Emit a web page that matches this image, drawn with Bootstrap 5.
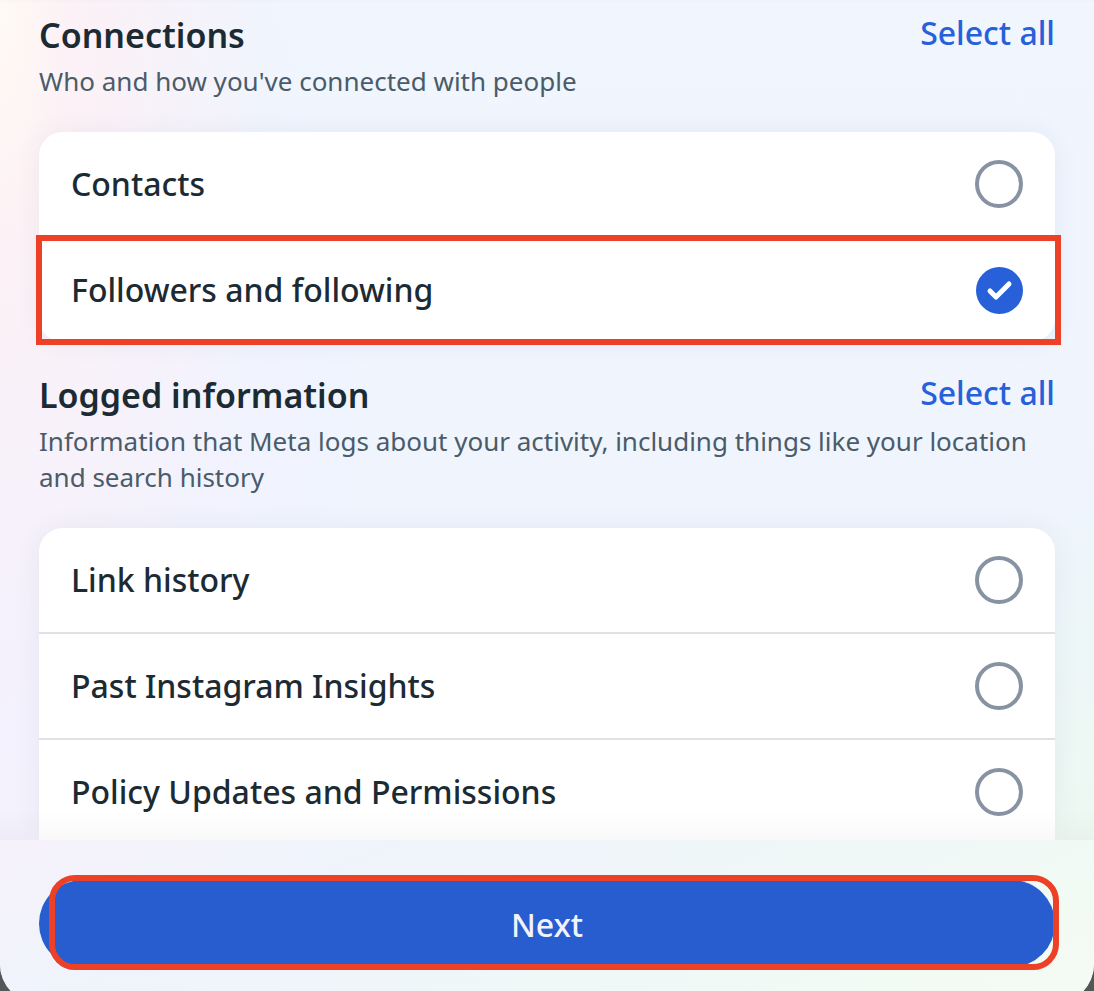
<!DOCTYPE html>
<html lang="en">
<head>
<meta charset="utf-8">
<meta name="viewport" content="width=device-width, initial-scale=1">
<title>Select information</title>
<link href="https://cdn.jsdelivr.net/npm/bootstrap@5.3.0/dist/css/bootstrap.min.css" rel="stylesheet">
<style>
  body {
    background: #555657;
    color: #1c2b33;
    font-family: "Noto Sans", sans-serif;
    font-size: 32px;
  }
  /* The sheet runs a little past the window, so its round corners are cut by the bottom edge */
  .sheet {
    height: calc(100vh + 13px);
    border-radius: 0 0 40px 40px;
    overflow: hidden;
    background:
      linear-gradient(to bottom, rgba(0, 0, 0, .015), transparent 4px),
      radial-gradient(ellipse 180px 420px at 100% 88%, #edf9f0, rgba(237, 249, 240, 0)),
      radial-gradient(ellipse 70px 260px at 0 0, #fffaf4, rgba(255, 250, 244, 0)),
      radial-gradient(ellipse 280px 560px at 0 10%, #fdf1f6 20%, rgba(253, 241, 246, 0)),
      radial-gradient(ellipse 380px 900px at 0 60%, #f4f1fd 10%, rgba(244, 241, 253, 0)),
      linear-gradient(#f0f5fe, #eef4fc);
  }
  .sheet-body { min-height: 0; padding: 14px 39px 0; }
  .group { margin-bottom: 32px; }
  .group-title { font-size: 34px; line-height: 42px; font-weight: 600; }
  .group-action { line-height: 38px; font-weight: 500; color: #2760d9; }
  .group-note { font-size: 26px; line-height: 36px; color: #4a5b69; margin: 7px 0 33px; }
  .option-list {
    --bs-list-group-border-radius: 24px;
    box-shadow: 0 0 28px rgba(40, 60, 100, .06);
  }
  .option {
    min-height: 104px;
    padding: 0 32px;
    font-weight: 500;
    color: #1c2b33;
    border: 0;
    cursor: pointer;
  }
  .option + .option { min-height: 106px; border-top: 2px solid #dee2e7; }
  .option .form-check-input {
    width: 48px;
    height: 48px;
    margin: 0;
    border: 4px solid #8793a3;
    border-radius: 50%;
    background-color: #fff;
  }
  .option .form-check-input:checked {
    width: 47px;
    height: 47px;
    border: 0;
    background: #2760d9 url("data:image/svg+xml,%3Csvg xmlns='http://www.w3.org/2000/svg' viewBox='0 0 47 47'%3E%3Cpath d='M14 24l6 6L33 17' fill='none' stroke='%23fff' stroke-width='5' stroke-linecap='round' stroke-linejoin='round'/%3E%3C/svg%3E") center / 100% no-repeat;
  }
  .callout-box { position: relative; }
  .callout-box::after {
    content: "";
    position: absolute;
    z-index: 2;
    border: 6px solid #ec4126;
    pointer-events: none;
  }
  .callout-row::after { inset: -3px -6px -3px -3px; }
  .callout-button::after { inset: -5px -4px -3px 10px; border-radius: 26px; }
  .sheet-footer {
    position: relative;
    padding: 40px 39px 37px;
    background:
      linear-gradient(155deg, #f6f2fd 0, #f3f3fa 14%, #eff4fc 27%, #eff5fa 42%, #eff8f7 62%, #f1faf4 80%, #f4fbf3 100%);
  }
  .sheet-footer::before {
    content: "";
    position: absolute;
    inset: -30px 0 100%;
    background: linear-gradient(transparent, rgba(0, 0, 0, .025));
  }
  .btn-next {
    --bs-btn-font-size: 32px;
    --bs-btn-font-weight: 500;
    --bs-btn-color: #f1f3fa;
    --bs-btn-bg: #275dce;
    --bs-btn-border-width: 0;
    --bs-btn-hover-color: #fff;
    --bs-btn-hover-bg: #2254bb;
    min-height: 87px;
    padding: 8px 12px 6px;
  }
</style>
</head>
<body class="overflow-hidden">
<main class="sheet d-flex flex-column">
  <div class="sheet-body flex-grow-1 overflow-hidden">
    <section class="group">
      <div class="d-flex justify-content-between align-items-start">
        <h2 class="group-title mb-0">Connections</h2>
        <a class="group-action text-decoration-none" href="#">Select all</a>
      </div>
      <p class="group-note">Who and how you've connected with people</p>
      <div class="list-group option-list">
        <label class="list-group-item option d-flex align-items-center justify-content-between" for="contacts">Contacts
          <input class="form-check-input" type="checkbox" id="contacts"></label>
        <label class="list-group-item option callout-box callout-row d-flex align-items-center justify-content-between" for="followers">Followers and following
          <input class="form-check-input" type="checkbox" id="followers" checked></label>
      </div>
    </section>
    <section class="group">
      <div class="d-flex justify-content-between align-items-start">
        <h2 class="group-title mb-0">Logged information</h2>
        <a class="group-action text-decoration-none" href="#">Select all</a>
      </div>
      <p class="group-note">Information that Meta logs about your activity, including things like your location and search history</p>
      <div class="list-group option-list">
        <label class="list-group-item option d-flex align-items-center justify-content-between" for="links">Link history
          <input class="form-check-input" type="checkbox" id="links"></label>
        <label class="list-group-item option d-flex align-items-center justify-content-between" for="insights">Past Instagram Insights
          <input class="form-check-input" type="checkbox" id="insights"></label>
        <label class="list-group-item option rounded-0 d-flex align-items-center justify-content-between" for="policy">Policy Updates and Permissions
          <input class="form-check-input" type="checkbox" id="policy"></label>
      </div>
    </section>
  </div>
  <footer class="sheet-footer">
    <div class="callout-box callout-button">
      <button type="button" class="btn btn-next d-block rounded-pill w-100">Next</button>
    </div>
  </footer>
</main>
<script src="https://cdn.jsdelivr.net/npm/bootstrap@5.3.0/dist/js/bootstrap.bundle.min.js"></script>
</body>
</html>
